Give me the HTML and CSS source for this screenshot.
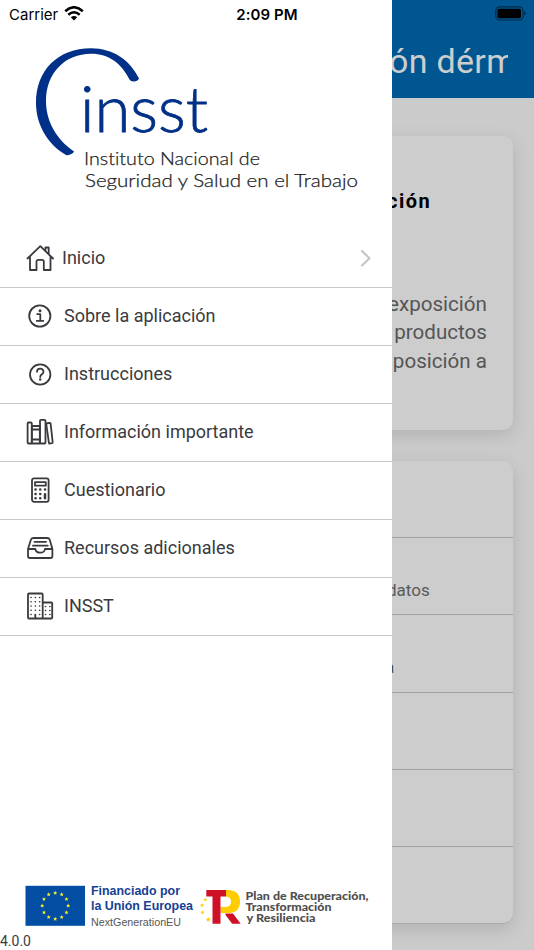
FILE: index.html
```html
<!DOCTYPE html>
<html lang="es">
<head>
<meta charset="utf-8">
<meta name="viewport" content="width=device-width, initial-scale=1">
<title>INSST</title>
<link rel="stylesheet" href="styles.css">
</head>
<body>
<div class="app">
  <main class="page">
    <header class="page-header"><h1 class="page-title">ón dérmica</h1></header>
    <section class="card intro">
      <h2 class="intro-title">ción</h2>
      <p class="intro-text">exposición<br>productos<br>posición a</p>
    </section>
    <section class="card list">
      <div class="list-row"></div>
      <div class="list-row"><span class="datos">datos</span></div>
      <div class="list-row"><span class="short">a</span></div>
      <div class="list-row"></div>
      <div class="list-row"></div>
      <div class="list-row"></div>
    </section>
  </main>

  <aside class="drawer">
    <svg class="logo" viewBox="0 0 392 230">
      <path fill="#003087" d="M139 78.500C130 60 113 48.200 91 48.200C58 48.200 36 70 36 103C36 124 47 144 66 155C69 156 74 153 74 151.500C56 139 46 121 46 101C46 73 65 53.700 91 53.700C109 53.700 122 64 129.500 79.500C131 82.500 138 82 139 78.500Z"/>
      <text class="logo-name" x="80" y="131.500" textLength="128" lengthAdjust="spacingAndGlyphs">insst</text>
      <text class="logo-sub" x="84" y="165" textLength="176" lengthAdjust="spacingAndGlyphs">Instituto Nacional de</text>
      <text class="logo-sub" x="85" y="186.500" textLength="273" lengthAdjust="spacingAndGlyphs">Seguridad y Salud en el Trabajo</text>
    </svg>
    <nav class="menu">
      <a class="item home">
        <svg class="icon" viewBox="0 0 28 28"><path d="M1.500 14.500L14.300 2.200L27 14.500M4 12.500V26H10.500V17.500Q10.500 15.900 12 15.900H16Q17.800 15.900 17.800 17.500V26H24.500V12.500M19.500 6.500V3.500H22.700V10"/></svg>
        <span class="label">Inicio</span>
        <svg class="chevron" viewBox="0 0 12 18"><path d="M2 2L9.500 9.200L2 16.500"/></svg>
      </a>
      <a class="item">
        <svg class="icon" viewBox="0 0 28 28"><circle cx="13.800" cy="14" r="10.600"/><path d="M11.200 12.200H14.300V18.700M10.800 18.900H17.300"/><circle class="solid" cx="14" cy="8.700" r="1.500"/></svg>
        <span class="label">Sobre la aplicación</span>
      </a>
      <a class="item">
        <svg class="icon" viewBox="0 0 28 28"><circle cx="14.200" cy="14.500" r="10.200"/><path d="M11 11.800C11 7.700 17.500 7.700 17.500 11.700C17.500 14.500 14.200 14 14.200 17"/><circle class="solid" cx="14.200" cy="19.500" r="1.200"/></svg>
        <span class="label">Instrucciones</span>
      </a>
      <a class="item">
        <svg class="icon" viewBox="0 0 28 28"><rect x="1.600" y="4.500" width="4.200" height="21" rx="1"/><rect x="5.800" y="8" width="8" height="17.500"/><path d="M6 11.500H13.500M6 21.500H13.500"/><rect x="14" y="1.800" width="5.500" height="23.700" rx="1"/><path d="M20.200 5.500L23.700 4.800Q24.400 4.800 24.600 5.500L26.700 24.300Q26.700 25 26 25.100L23 25.500Z"/></svg>
        <span class="label">Información importante</span>
      </a>
      <a class="item">
        <svg class="icon" viewBox="0 0 28 28"><rect x="6" y="2.300" width="16.600" height="23.500" rx="2"/><rect x="9" y="6.100" width="10.800" height="3.600"/><path class="dots" d="M9.500 13.500H9.600M14.200 13.500H14.300M19 13.500H19.100M9.500 18H9.600M14.200 18H14.300M9.500 22.300H9.600M14.200 22.300H14.300M19 18.300V22.300"/></svg>
        <span class="label">Cuestionario</span>
      </a>
      <a class="item">
        <svg class="icon" viewBox="0 0 28 28"><path d="M2 15L4.800 6Q5.300 4 7.300 4H21.200Q23.300 4 23.800 6L26.400 15V22Q26.400 24 24.400 24H4Q2 24 2 22V15H9.300Q10 18.700 14.200 18.700Q18.500 18.700 19 15H26.200M8.500 7.800H20M7 11.700H21.700"/></svg>
        <span class="label">Recursos adicionales</span>
      </a>
      <a class="item">
        <svg class="icon" viewBox="0 0 28 28"><rect x="2" y="1.500" width="14.700" height="25" rx="1"/><path d="M16.700 10.500H25.200Q26.200 10.500 26.200 11.500V25.500Q26.200 26.500 25.200 26.500H16.700M9.300 26V23"/><path class="windows" d="M5 5.500H14M5 9.700H14M5 14H14M5 18.200H14M5 22.500H14M19.500 14.500H24M19.500 18.500H24M19.500 22.500H24"/></svg>
        <span class="label">INSST</span>
      </a>
    </nav>
    <footer class="funding">
      <svg class="funding-art" viewBox="0 0 392 66">
        <defs><path id="star" d="M0-2.200L.6-.7L2.100-.7L.9.300L1.300 1.800L0 .9L-1.300 1.800L-.9.300L-2.100-.7L-.6-.7Z"/></defs>
        <rect x="25.500" y="1.800" width="59.500" height="40" fill="#034ea2"/>
        <g fill="#fff12d">
          <use href="#star" x="55.200" y="9"/><use href="#star" x="61.700" y="10.500"/><use href="#star" x="66.500" y="15.200"/><use href="#star" x="68.200" y="21.800"/><use href="#star" x="66.500" y="28.500"/><use href="#star" x="61.700" y="33.200"/><use href="#star" x="55.200" y="35"/><use href="#star" x="48.700" y="33.200"/><use href="#star" x="44" y="28.500"/><use href="#star" x="42.200" y="21.800"/><use href="#star" x="44" y="15.200"/><use href="#star" x="48.700" y="10.500"/>
        </g>
        <text class="eu-bold" x="91" y="11" textLength="89" lengthAdjust="spacingAndGlyphs">Financiado por</text>
        <text class="eu-bold" x="91" y="26" textLength="102" lengthAdjust="spacingAndGlyphs">la Unión Europea</text>
        <text class="eu-next" x="91" y="42" textLength="90" lengthAdjust="spacingAndGlyphs">NextGenerationEU</text>
        <path fill="#ffcc00" d="M226 6H229Q240 7 240 17.500Q240 28.500 229 29H220.500V23H226Q231 22.500 231 17.500Q231 13 226 12.500Z"/>
        <path fill="#ce1126" d="M206.300 6H226V12.500H220.500V39.800H212.500V12.500H206.300ZM225.500 29.500H233L240.700 39.800H232.200L225.500 31Z"/>
        <g fill="#ffcc00"><use href="#star" x="205.300" y="15.700"/><use href="#star" x="202" y="21.300"/><use href="#star" x="202.500" y="28.500"/><use href="#star" transform="translate(208.200 35.500) scale(1.250)"/></g>
        <text class="plan" x="245.500" y="15.500" textLength="123" lengthAdjust="spacingAndGlyphs">Plan de Recuperación,</text>
        <text class="plan" x="245.500" y="27" textLength="86" lengthAdjust="spacingAndGlyphs">Transformación</text>
        <text class="plan" x="246.500" y="38.200" textLength="69" lengthAdjust="spacingAndGlyphs">y Resiliencia</text>
      </svg>
      <span class="version">4.0.0</span>
    </footer>
  </aside>

  <div class="status">
    <span class="carrier">Carrier
      <svg class="wifi" viewBox="0 0 20 15"><path d="M1.200 5.200Q10-2.700 18.800 5.200M4.300 8.700Q10 3.700 15.700 8.700"/><path class="wifi-dot" d="M6.800 11.300Q10 8.500 13.200 11.300L10 14.500Z"/></svg>
    </span>
    <span class="time">2:09 PM</span>
    <svg class="battery" viewBox="0 0 32 16"><rect class="battery-case" x=".8" y=".8" width="27.200" height="13.200" rx="4"/><rect x="2.500" y="2.700" width="23.500" height="9.600" rx="2"/><path d="M29.300 5.200Q30.800 6 30.800 7.400Q30.800 8.800 29.300 9.600Z" opacity=".55"/></svg>
  </div>
</div>
</body>
</html>
```

FILE: styles.css
```css
* { box-sizing: border-box; }
body { margin: 0; font-family: Roboto, "Liberation Sans", sans-serif; }
.app { position: relative; width: 534px; height: 950px; overflow: hidden; background: #cbcbcb; }

.page-header { height: 98px; padding: 38px 26px 0 389px; background: #005691; }
.page-title { margin: 0; overflow: hidden; white-space: nowrap; font-size: 34px; font-weight: 400; line-height: 46px; letter-spacing: .3px; color: #cdcdcd; }
.card { margin-right: 21px; border-radius: 10px; background: #cdcdcd; box-shadow: 0 5px 18px rgba(0, 0, 0, .13); }
.intro { height: 294px; margin-top: 38px; padding: 50px 26px 0 387px; }
.intro-title { margin: 0; font-size: 20px; font-weight: 700; line-height: 30px; letter-spacing: 1.500px; color: #000; }
.intro-text { display: flex; flex-direction: column; margin: 74px 0 0; text-align: right; white-space: nowrap; font-size: 20.600px; line-height: 28.400px; color: #555; }
.intro-text { display: block; margin-left: -10px; }
.list { height: 463px; margin-top: 31px; border-bottom: 1px solid #aaa; }
.list-row { display: flex; height: 77.200px; padding: 29px 0 0 387px; border-bottom: 1px solid #a2a2a2; font-size: 17px; line-height: 46px; color: #5a5a5a; }
.list-row:last-child { border: 0; }
.short { margin-left: -2px; color: #444; }

.drawer { position: absolute; inset: 0 auto 0 0; display: flex; flex-direction: column; width: 392px; background: #fff; }
.logo { display: block; width: 392px; height: 230px; }
.logo text { font-variant-ligatures: none; }
.logo-name { font: 300 63px Lato, sans-serif; fill: #003087; stroke: #003087; stroke-width: .8; }
.logo-sub { font: 300 18px Lato, sans-serif; fill: #222; stroke: #222; stroke-width: .25; }
.item { display: flex; align-items: center; height: 58px; padding: 0 20px 0 26px; border-bottom: 1px solid #c8c8c8; color: #3a3a3e; }
.icon { flex: none; width: 28px; height: 28px; margin: -1px 10px 0 0; fill: none; stroke: #3a3a3e; stroke-width: 1.800; stroke-linejoin: round; stroke-linecap: round; }
.home .icon { margin-right: 8px; }
.icon .solid { fill: #3a3a3e; stroke: none; }
.icon .dots { stroke-width: 2.500; }
.icon .windows { stroke-width: 1.600; stroke-dasharray: .1 4.200; }
.label { flex: 1; margin-top: -1px; font-size: 18px; line-height: 28px; }
.chevron { width: 12px; height: 18px; margin-top: -2px; fill: none; stroke: #c6c6c8; stroke-width: 2.200; stroke-linecap: round; stroke-linejoin: round; }
.funding { display: flex; flex-direction: column; height: 66px; margin-top: auto; }
.funding-art { flex: none; width: 392px; height: 66px; }
.eu-bold { font: 700 12.500px "Liberation Sans", sans-serif; fill: #164194; }
.eu-next { font: 400 10.500px "Liberation Sans", sans-serif; fill: #555; }
.plan { font: 900 11px Lato, sans-serif; fill: #4f4f4f; }
.version { margin-top: -18px; font-size: 14px; line-height: 18px; color: #3a3a3e; }

.status { position: absolute; inset: 0 0 auto; display: grid; grid-template-columns: 1fr auto 1fr; align-items: center; height: 28px; padding: 0 7px 0 9px; font-family: Inter, sans-serif; font-size: 15px; color: #000; }
.carrier { display: flex; align-items: center; gap: 6px; }
.wifi { width: 20px; height: 15px; margin-top: -2px; fill: none; stroke: #000; stroke-width: 2.500; }
.wifi-dot { fill: #000; stroke: none; }
.time { margin-left: -2px; font-weight: 600; letter-spacing: .1px; }
.battery { justify-self: end; width: 32px; height: 16px; }
.battery-case { fill: none; stroke: #000; stroke-opacity: .5; stroke-width: 1.200; }
```
